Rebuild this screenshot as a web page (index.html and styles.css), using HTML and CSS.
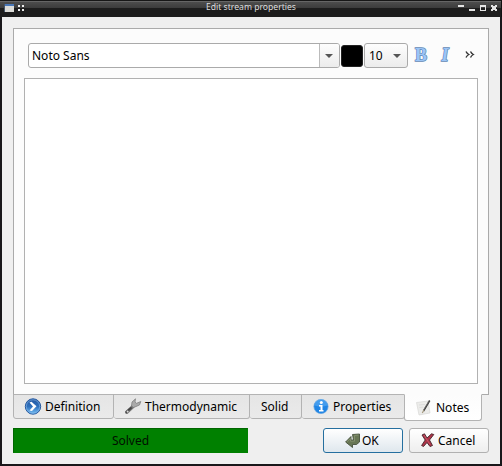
FILE: index.html
```html
<!DOCTYPE html>
<html lang="en">
<head>
<meta charset="utf-8">
<title>Edit stream properties</title>
<link rel="stylesheet" href="styles.css">
</head>
<body>
<div class="window">
  <header class="titlebar">
    <svg class="sys" width="26" height="17" viewBox="0 0 26 17" shape-rendering="crispEdges">
      <rect x="5" y="4" width="9" height="8" fill="#dcdcd8"/><rect x="5" y="4" width="9" height="2" fill="#4a78b8"/><rect x="4" y="4" width="1" height="8" fill="#46566a"/>
      <path d="M18 5h2v2h-2zM22 5h2v2h-2zM18 9h2v2h-2zM22 9h2v2h-2z" fill="#eee"/>
    </svg>
    <span class="caption">Edit stream properties</span>
    <svg class="controls" width="44" height="17" viewBox="0 0 44 17" shape-rendering="crispEdges" fill="#e4e4e4">
      <path d="M2 5h6v2H2zM13 9h6v2h-6z"/>
      <path fill-rule="evenodd" d="M24 5h6v6h-6zM25 7v3h4V7z"/>
      <path d="M35 5h2v1h2V5h2v2h-1v2h1v2h-2v-1h-2v1h-2V9h1V7h-1z"/>
    </svg>
  </header>
  <main class="dialog">
    <section class="page">
      <div class="toolbar">
        <div class="combo family"><span>Noto Sans</span><i class="drop"><b class="arrow"></b></i></div>
        <div class="swatch"></div>
        <div class="combo size"><span>10</span><b class="arrow"></b></div>
        <span class="format bold">B</span>
        <span class="format italic">I</span>
        <svg class="more" width="10" height="8" viewBox="0 0 10 8" fill="none" stroke="#333" stroke-width="1.4"><path d="M1 .5Q2 2.500 3.800 3.500Q2 4.500 1 6.500M5.500 .5Q6.500 2.500 8.300 3.500Q6.500 4.500 5.500 6.500"/></svg>
      </div>
      <div class="editor"></div>
    </section>
    <nav class="tabs">
      <div class="tab definition">
        <svg width="18" height="18" viewBox="0 0 18 18"><defs><linearGradient id="blue" x2="0" y2="1"><stop stop-color="#2457a0"/><stop offset=".5" stop-color="#2e70bd"/><stop offset="1" stop-color="#75c0f5"/></linearGradient></defs><circle cx="9" cy="8.500" r="7.700" fill="url(#blue)" stroke="#285aa0" stroke-width="1"/><circle cx="9" cy="8.500" r="6.700" fill="none" stroke="#8ab9e8" stroke-width=".6"/><path d="M5.500 4.500L7.500 3.800 12.500 8.200 8 13 5.500 12.500 9 8.500z" fill="#fff"/></svg>
        <span>Definition</span>
      </div>
      <div class="tab thermo">
        <svg width="18" height="18" viewBox="0 0 18 18"><path d="M2.800 14.200L9 8.500" stroke="#777" stroke-width="3.500" stroke-linecap="round"/><path d="M1.800 14.500L7.500 9.500" stroke="#454545" stroke-width="1.800"/><path d="M7.500 8L8 4 11.500 .8 11 4 12.500 5.300 16.800 3.500 15.500 7 12 8.500 9.500 9.500z" fill="#aaa" stroke="#777" stroke-width=".7"/><circle cx="3.600" cy="13.500" r="1" fill="#ddd"/></svg>
        <span>Thermodynamic</span>
      </div>
      <div class="tab solid"><span>Solid</span></div>
      <div class="tab props">
        <svg width="16" height="16" viewBox="0 0 16 16"><circle cx="8" cy="7.500" r="7.100" fill="#2085e5" stroke="#60a2e0" stroke-width=".7"/><path d="M1.500 6.500a6.500 6.500 0 0113 0Q8 8.500 1.500 6.500z" fill="#65b3f5" opacity=".5"/><circle cx="8.300" cy="3.500" r="1.500" fill="#fff"/><path d="M6 6h3.500v5h1v1.500H6V11h1.500V7.500H6z" fill="#fff"/></svg>
        <span>Properties</span>
      </div>
      <div class="tab notes">
        <svg width="18" height="18" viewBox="0 0 18 18"><path d="M1.500 3.500L13 2 15 14 4 16z" fill="#ececea" stroke="#d4d4d2" stroke-width=".6"/><path d="M4 6l6-.6M4.300 8.500l4-.4" stroke="#d4d4d4" stroke-width=".6"/><path d="M14.700 1.500L8.500 12" stroke="#333" stroke-width="1.500"/><path d="M14.200 1.800L8.600 11" stroke="#999" stroke-width=".5"/><path d="M8.900 11L7.300 14" stroke="#a69b80" stroke-width="1.200"/></svg>
        <span>Notes</span>
      </div>
    </nav>
    <footer class="footer">
      <div class="status">Solved</div>
      <div class="button ok">
        <svg width="17" height="16" viewBox="0 0 17 16"><path d="M7.500 1.500L14.500 1V9L11.500 11.500H7.500V14.500L.6 9 6 3.500V7H8.500z" fill="#677654" stroke="#46513c" stroke-width=".9" stroke-linejoin="round"/><path d="M2 8.800L5.500 5.500V8.200H9.500V2.500L13.500 2" fill="none" stroke="#8c9a77" stroke-width=".7"/></svg>
        <span>OK</span>
      </div>
      <div class="button cancel">
        <svg width="14" height="15" viewBox="0 0 14 15"><path d="M1 2L3.500 .8 6 5 10.500 .8 12.800 1.500 8.500 7 11.500 12.500 9 13.500 6 9.500 2.500 13.500 .6 12.500 4.200 7z" fill="#ad3448" stroke="#45252b" stroke-width=".9" stroke-linejoin="round"/><path d="M3 2L9 11.500" stroke="#cf6070" stroke-width=".8"/></svg>
        <span>Cancel</span>
      </div>
    </footer>
  </main>
</div>
</body>
</html>
```

FILE: styles.css
```css
* { box-sizing: border-box; }
body { margin: 0; font: 12px/16px "Noto Sans", sans-serif; color: #000; }
svg { display: block; flex: none; }
.window { width: 502px; height: 466px; background: #19171a; padding: 0 2px 2px; display: flex; flex-direction: column; }
.titlebar {
  height: 17px; margin: 0 -2px; flex: none; display: flex; justify-content: space-between;
  background: linear-gradient(#171717 0 1px, #666 1px 2px, #4d4d4d 2px, #3c3c3c 8px, #1d1d1d 8px 100%);
  border-right: 1px solid #111;
}
.caption { font-size: 8.6px; line-height: 14px; color: #ddd; padding-left: 20px; }
.controls { margin-right: 1px; }
.dialog { flex: 1; background: #efefef; padding: 11px 11px 0; width: 498px; }
.page { width: 476px; height: 367px; border: 1px solid #aaa; background: #fcfcfc; padding: 14px 10px 0; }
.toolbar { height: 25px; display: flex; align-items: center; padding-left: 4px; }
.combo { height: 25px; border: 1px solid #aaa; border-radius: 3px; display: flex; align-items: center; padding-left: 3px; background: linear-gradient(#fdfdfd, #ececec); }
.family { width: 312px; background: #fff; justify-content: space-between; }
.drop { width: 20px; height: 23px; border-left: 1px solid #bbb; background: linear-gradient(#fdfdfd, #ececec); display: flex; align-items: center; justify-content: center; padding-right: 2px; border-radius: 0 2px 2px 0; }
.arrow { border: 4px solid transparent; border-top-color: #555; border-bottom: 0; }
.swatch { width: 22px; height: 22px; margin: 0 1px; background: #000; border: 1px solid #222; border-radius: 3px; }
.size { width: 44px; padding: 0 6px 0 4px; justify-content: space-between; }
.format { font: bold 18px/22px "Liberation Serif", serif; color: #9bc5f7; -webkit-text-stroke: 1.4px #6288b6; paint-order: stroke fill; text-align: center; padding-bottom: 2px; }
.bold { width: 14px; margin-left: 6px; }
.italic { width: 12px; margin-left: 11px; font-style: italic; }
.more { margin: 0 0 2px 14px; }
.editor { width: 454px; height: 306px; margin-top: 10px; border: 1px solid #b1b1b1; background: #fff; }
.tabs { display: flex; height: 34px; margin-top: -1px; align-items: flex-start; }
.tab { height: 25px; border: 1px solid #b3b3b3; border-left-width: 0; border-radius: 0 0 3px 3px; background: linear-gradient(#e5e5e5, #eaeaea); display: flex; align-items: center; white-space: nowrap; }
.definition { width: 101px; border-left-width: 1px; padding-left: 10px; gap: 3px; }
.thermo { width: 136px; padding-left: 10px; gap: 3px; }
.solid { width: 52px; padding-left: 11px; }
.props { width: 103px; padding-left: 11px; gap: 4px; }
.notes { width: 78px; height: 27px; margin-left: -1px; border-left-width: 1px; border-top-color: #fcfcfc; background: linear-gradient(#fcfcfc, #fff); padding-left: 10px; gap: 3px; }
.footer { display: flex; height: 25px; }
.status { width: 235px; background: #008000; border: 1px solid #006600; border-right-color: #008000; border-bottom-color: #008000; text-align: center; line-height: 23px; color: #001000; }
.button { width: 80px; height: 25px; border: 1px solid #b1b1b1; border-radius: 3px; background: linear-gradient(#fff, #eee); display: flex; align-items: center; }
.ok { margin-left: 75px; padding-left: 21px; border-color: #256f9f; background: linear-gradient(#fff, #dfe7ed); }
.cancel { margin-left: 6px; padding-left: 11px; gap: 3px; }
```
